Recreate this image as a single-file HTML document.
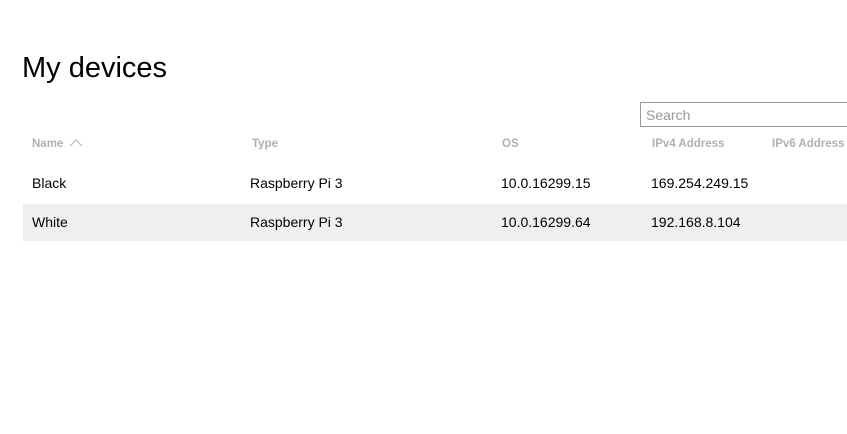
<!DOCTYPE html>
<html><head><meta charset="utf-8"><style>
html,body{margin:0;padding:0;background:#fff;width:847px;height:434px;overflow:hidden;font-family:"Segoe UI","Liberation Sans",sans-serif;}
h1{position:absolute;left:22px;top:48px;margin:0;font-weight:normal;font-size:29px;line-height:40px;color:#000;}
.search{position:absolute;left:640px;top:102px;width:220px;height:23px;border:1px solid #999;box-sizing:content-box;}
.search span{position:absolute;left:5px;top:4px;font-size:14px;color:#999;}
.h{position:absolute;top:138px;font-size:11.5px;font-weight:bold;color:#b0b0b0;}
.row{position:absolute;left:23px;width:824px;height:37px;}
.row span{position:absolute;top:10px;font-size:14px;color:#000;}
</style></head><body>
<h1>My devices</h1>
<div class="search"><span>Search</span></div>
<div class="h" style="left:32px">Name <svg width="14" height="9" style="vertical-align:0px;margin-left:2px" viewBox="0 0 14 9"><path d="M1 8 L7 2 L13 8" fill="none" stroke="#b8b8b8" stroke-width="1.2"/></svg></div>
<div class="h" style="left:252px">Type</div>
<div class="h" style="left:502px">OS</div>
<div class="h" style="left:652px">IPv4 Address</div>
<div class="h" style="left:772px">IPv6 Address</div>
<div class="row" style="top:165px"><span style="left:9px">Black</span><span style="left:227px">Raspberry Pi 3</span><span style="left:478px">10.0.16299.15</span><span style="left:628px">169.254.249.15</span></div>
<div class="row" style="top:204px;background:#efefef"><span style="left:9px">White</span><span style="left:227px">Raspberry Pi 3</span><span style="left:478px">10.0.16299.64</span><span style="left:628px">192.168.8.104</span></div>
</body></html>
